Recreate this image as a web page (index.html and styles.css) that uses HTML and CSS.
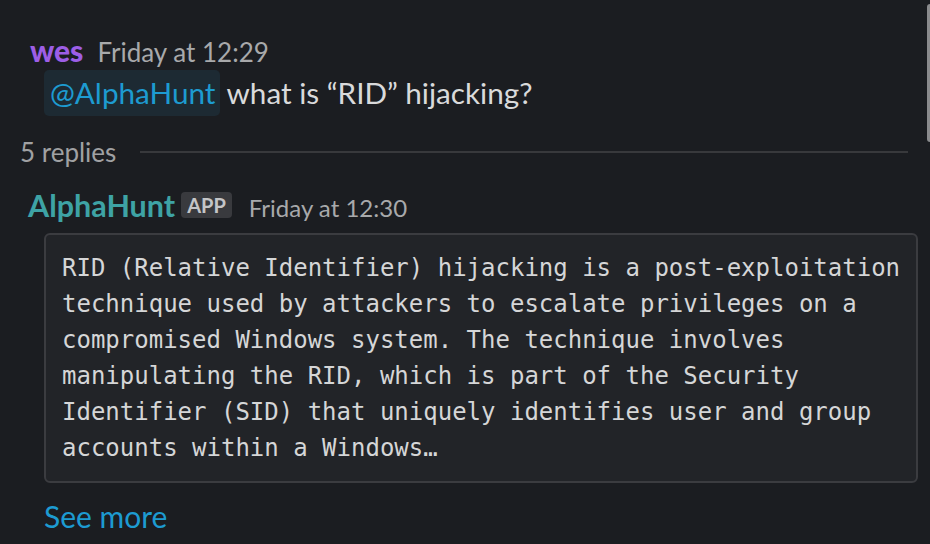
FILE: index.html
```html
<!DOCTYPE html>
<html lang="en">
<head>
    <meta charset="UTF-8">
    <title>Thread</title>
    <link rel="stylesheet" href="styles.css">
</head>
<body>
    <div class="scroll-thumb"></div>
    <div class="thread">
        <div class="message">
            <div class="msg-head">
                <span class="author author-wes">wes</span>
                <span class="time">Friday at 12:29</span>
            </div>
            <div class="msg-body">
                <span class="mention">@AlphaHunt</span> what is “RID” hijacking?
            </div>
        </div>

        <div class="replies">
            <span class="replies-count">5 replies</span>
            <span class="replies-line"></span>
        </div>

        <div class="message reply">
            <div class="msg-head">
                <span class="author author-bot">AlphaHunt</span>
                <span class="badge">APP</span>
                <span class="time">Friday at 12:30</span>
            </div>
            <pre class="code-block">RID (Relative Identifier) hijacking is a post-exploitation
technique used by attackers to escalate privileges on a
compromised Windows system. The technique involves
manipulating the RID, which is part of the Security
Identifier (SID) that uniquely identifies user and group
accounts within a Windows…</pre>
            <a class="see-more" href="#">See more</a>
        </div>
    </div>
</body>
</html>
```

FILE: styles.css
```css
body {
    margin: 0;
    background-color: #1b1d21;
    font-family: Lato, "Open Sans", sans-serif;
    color: #d1d2d3;
    height: 544px;
    overflow: hidden;
}

.scroll-thumb {
    position: absolute;
    top: 4px;
    right: 0;
    width: 3px;
    height: 138px;
    background-color: #8a8b8d;
    border-radius: 3px 0 0 3px;
}

.thread {
    padding: 30px 22px 0 20px;
}

.message {
    padding-left: 10px;
}

.msg-head {
    display: flex;
    align-items: baseline;
    gap: 14px;
    height: 40px;
    line-height: 40px;
}

.author {
    font-weight: 900;
    font-size: 30px;
}

.author-wes {
    color: #9d5ee6;
}

.author-bot {
    color: #3ea3a5;
    font-weight: 700;
}

.time {
    font-size: 26px;
    color: #a8a9ab;
}

.msg-body {
    font-size: 29.7px;
    line-height: 46px;
    color: #d9dadb;
    padding-left: 14px;
}

.mention {
    display: inline-block;
    background-color: #1d2a33;
    color: #1d9bd1;
    border-radius: 5px;
    padding: 0 4px 0 6px;
}

.replies {
    display: flex;
    align-items: center;
    gap: 24px;
    margin-top: 19px;
    height: 34px;
}

.replies-count {
    font-size: 26px;
    color: #a0a1a3;
}

.replies-line {
    flex: 1;
    height: 2px;
    background-color: #38393c;
}

.reply {
    margin-top: 16px;
    padding-left: 8px;
}

.reply .msg-head {
    gap: 6px;
}

.reply .author-bot {
    font-size: 30.5px;
}

.reply .time {
    font-size: 24px;
}

.badge {
    background-color: #393a3e;
    color: #c4c5c7;
    font-size: 20px;
    font-weight: 700;
    line-height: 26px;
    height: 26px;
    padding: 0 6px;
    border-radius: 4px;
    margin-right: 11px;
    align-self: center;
}

.code-block {
    margin: 8px -10px 0 16px;
    padding: 15px 16px;
    background-color: #222428;
    border: 2px solid #3b3c40;
    border-radius: 6px;
    font-family: "DejaVu Sans Mono", monospace;
    font-size: 24px;
    line-height: 36px;
    color: #d5d6d7;
    white-space: pre;
}

.see-more {
    display: block;
    margin: 13px 0 0 16px;
    font-size: 30px;
    line-height: 40px;
    color: #1d9bd1;
    text-decoration: none;
}
```
